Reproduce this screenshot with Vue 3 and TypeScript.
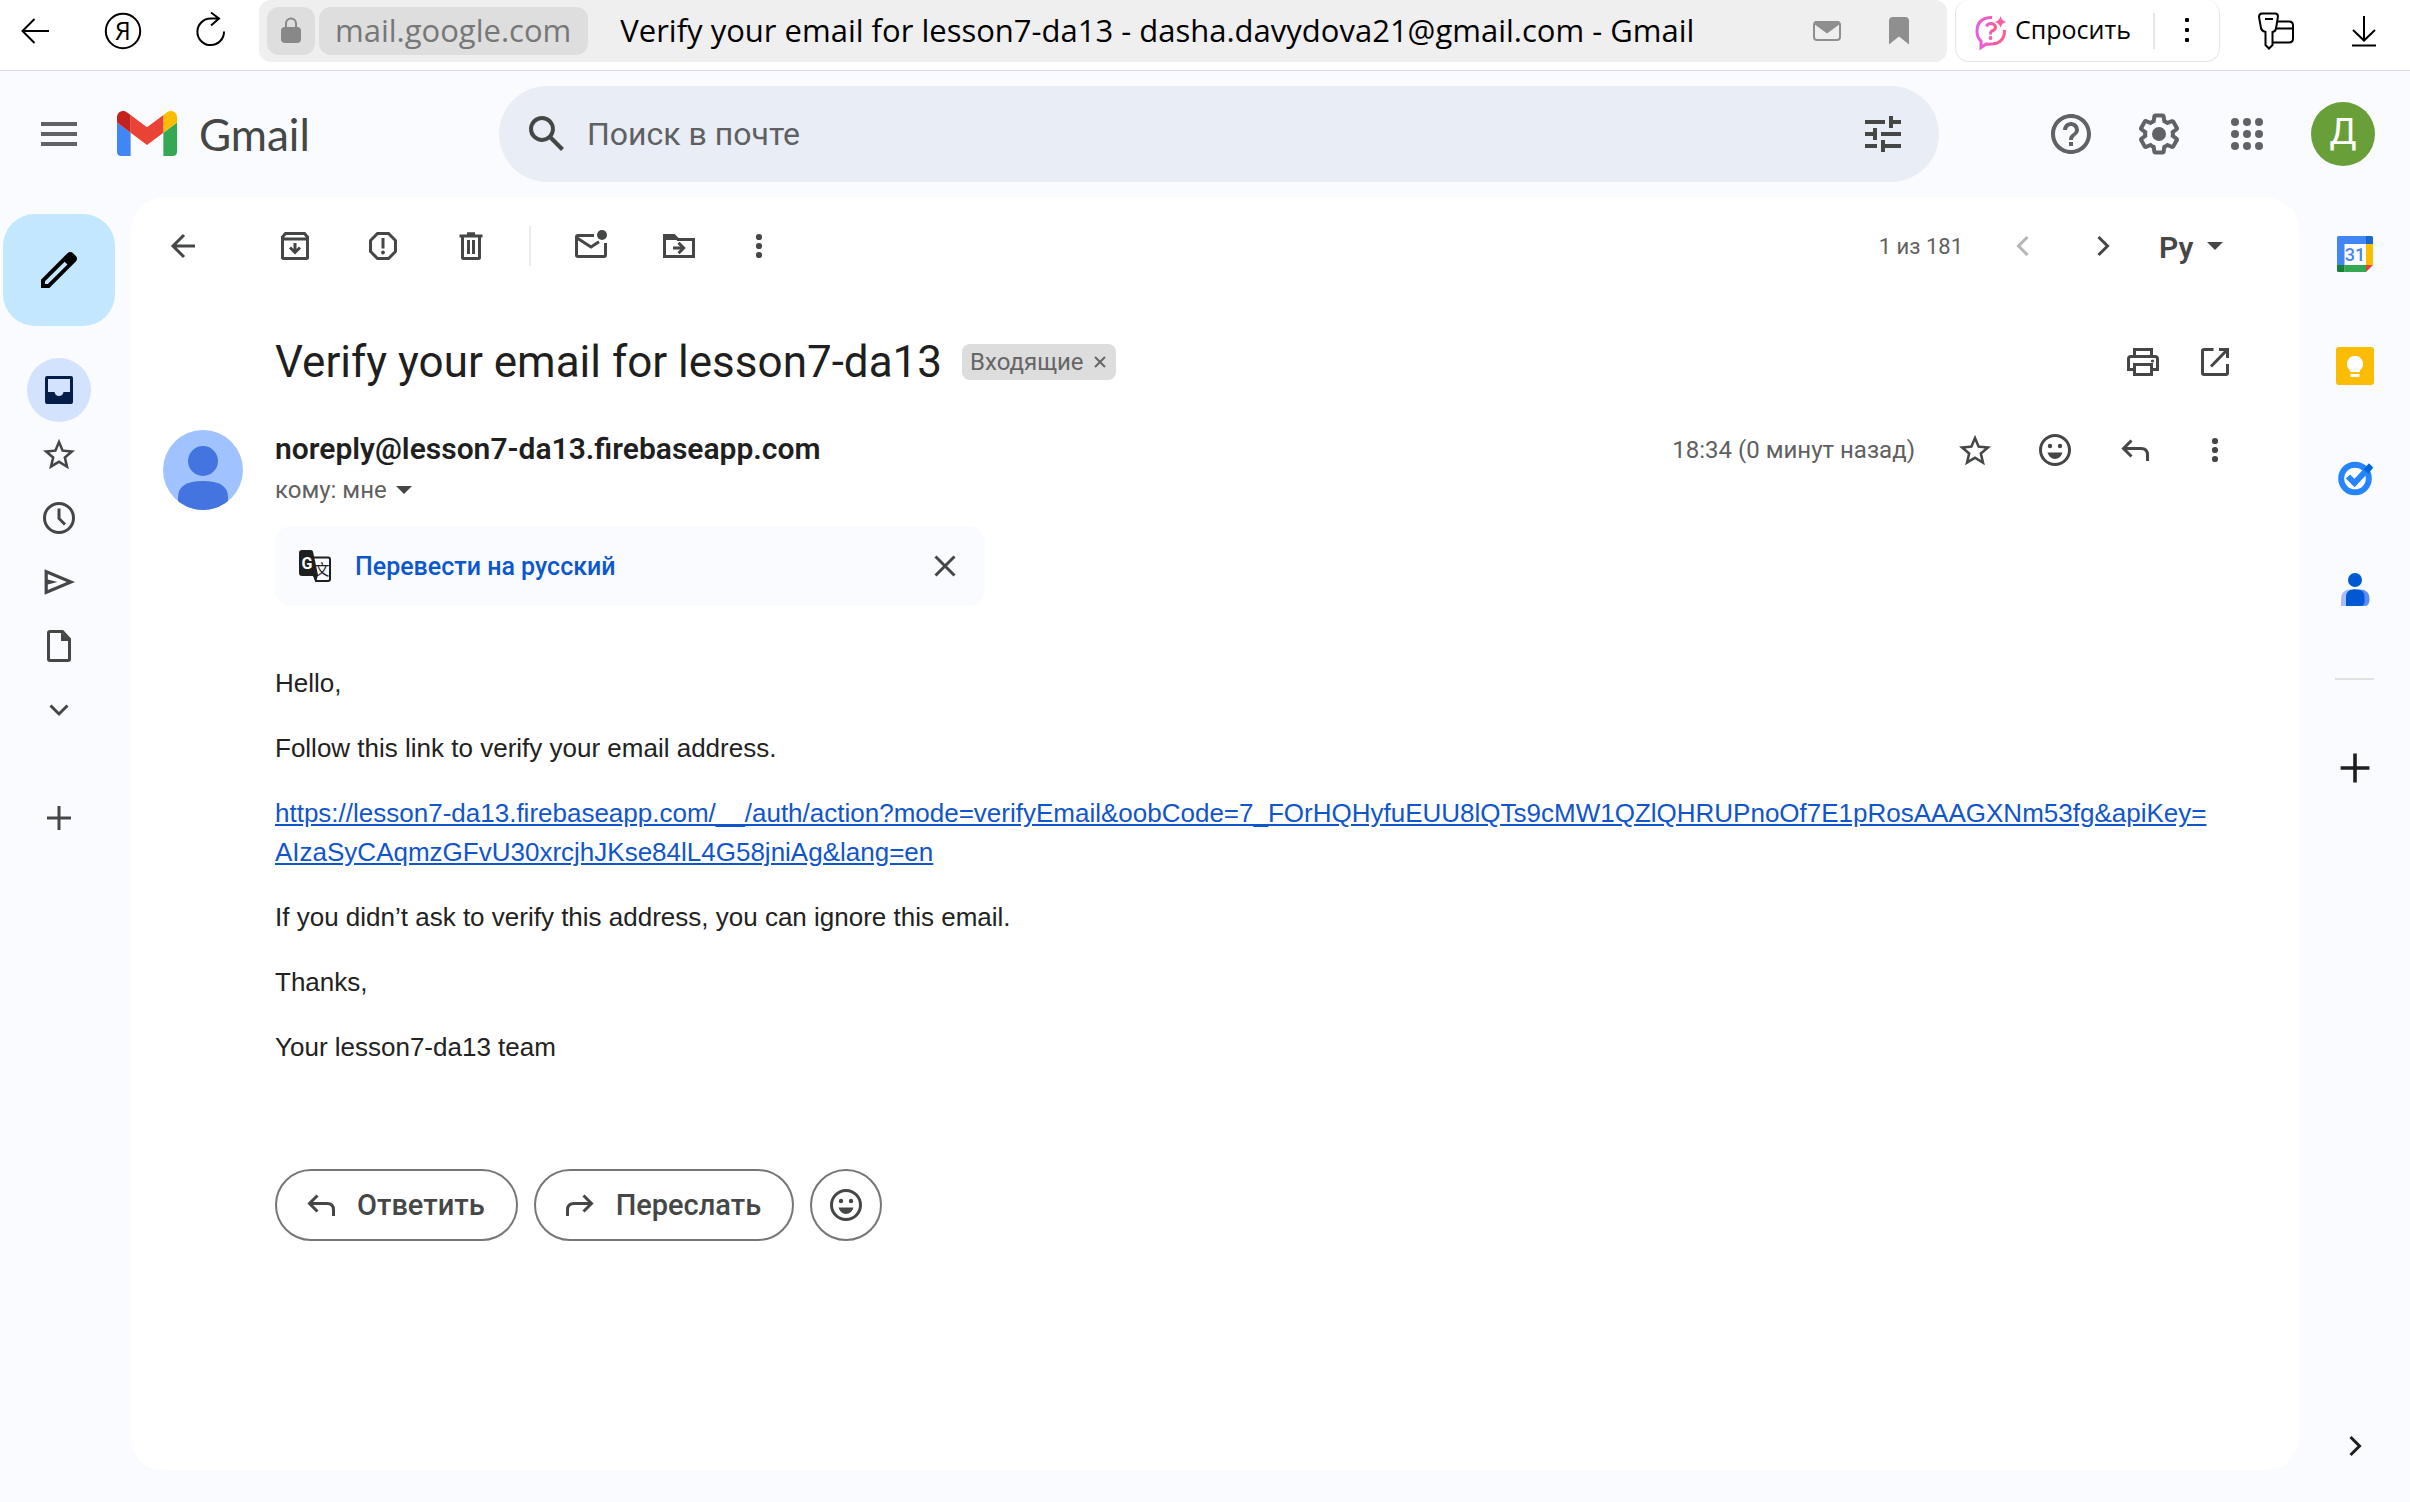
<script setup lang="ts">
import { ref } from 'vue'

interface Action {
  icon: string
  label: string
}

const query = ref('')
const subject = 'Verify your email for lesson7-da13'
const account = 'dasha.davydova21@gmail.com'
const sender = 'noreply@lesson7-da13.firebaseapp.com'
const verifyUrl =
  'https://lesson7-da13.firebaseapp.com/__/auth/action?mode=verifyEmail&oobCode=7_FOrHQHyfuEUU8lQTs9cMW1QZlQHRUPnoOf7E1pRosAAAGXNm53fg&apiKey=AIzaSyCAqmzGFvU30xrcjhJKse84lL4G58jniAg&lang=en'

const folders: Action[] = [
  { icon: 'inbox', label: 'Входящие' },
  { icon: 'star', label: 'Помеченные' },
  { icon: 'clock', label: 'Отложенные' },
  { icon: 'send', label: 'Отправленные' },
  { icon: 'file', label: 'Черновики' },
  { icon: 'down', label: 'Ещё' },
]

const primaryActions: Action[] = [
  { icon: 'archive', label: 'Архивировать' },
  { icon: 'spam', label: 'В спам' },
  { icon: 'trash', label: 'Удалить' },
]

const secondaryActions: Action[] = [
  { icon: 'unread', label: 'Отметить как непрочитанное' },
  { icon: 'move', label: 'Переместить в' },
]

const messageActions: Action[] = [
  { icon: 'star', label: 'Пометить' },
  { icon: 'smile', label: 'Добавить реакцию' },
  { icon: 'reply', label: 'Ответить' },
  { icon: 'more', label: 'Ещё' },
]

const addons: Action[] = [
  { icon: 'calendar', label: 'Календарь' },
  { icon: 'keep', label: 'Keep' },
  { icon: 'tasks', label: 'Задачи' },
  { icon: 'contacts', label: 'Контакты' },
]
</script>

<template>
  <div class="page">
    <svg class="sprite" aria-hidden="true">
      <symbol id="back" viewBox="0 0 40 40"><path class="ln" d="M32 20H10.500M21 9 10 20l11 11" /></symbol>
      <symbol id="archive" viewBox="0 0 40 40">
        <path class="ln" d="M7.500 11 10.500 7.500h19l3 3.500v20.500q0 1-1 1h-23q-1 0-1-1zM7.500 13h25M20 17v9M15 21.500l5 5 5-5" />
      </symbol>
      <symbol id="spam" viewBox="0 0 40 40">
        <path class="ln" d="M14.500 7.500h11l7 7v11l-7 7h-11l-7-7v-11zM20 12v10.500" /><circle cx="20" cy="26.500" r="1.900" />
      </symbol>
      <symbol id="trash" viewBox="0 0 40 40">
        <path class="ln" d="M8.500 10h23M16 7.800h8M11.500 10v21.500q0 1 1 1h15q1 0 1-1v-21.500M17.500 14v14M22.500 14v14" />
      </symbol>
      <symbol id="unread" viewBox="0 0 40 40">
        <path class="ln" d="M23 9.500H7q-1.500 0-1.500 1.500v18q0 1.500 1.500 1.500h26q1.500 0 1.500-1.500V17M6 12l14 9 8-5.200" />
        <circle cx="31" cy="9" r="5" />
      </symbol>
      <symbol id="move" viewBox="0 0 40 40">
        <path class="ln" d="M5.500 30.500v-21H15l4 4h15.500v17zM14 22h10M19.500 16.800l5.200 5.200-5.200 5.200" />
        <path d="M5 9h10.500l5 5H5z" />
      </symbol>
      <symbol id="more" viewBox="0 0 40 40"><circle cx="20" cy="11" r="3.100" /><circle cx="20" cy="20" r="3.100" /><circle cx="20" cy="29" r="3.100" /></symbol>
      <symbol id="prev" viewBox="0 0 40 40"><path class="ln" d="M24.500 11l-9 9 9 9" /></symbol>
      <symbol id="next" viewBox="0 0 40 40"><path class="ln" d="M15.500 11l9 9-9 9" /></symbol>
      <symbol id="down" viewBox="0 0 40 40"><path class="ln" d="M11.500 15.500l8.500 8.500 8.500-8.500" /></symbol>
      <symbol id="plus" viewBox="0 0 40 40"><path class="ln" d="M20 8v24M8 20h24" /></symbol>
      <symbol id="close" viewBox="0 0 40 40"><path class="ln" d="M10.500 10.500l19 19M29.500 10.500l-19 19" /></symbol>
      <symbol id="star" viewBox="-0.500 -1 25 25">
        <path d="M22 9.240l-7.190-.62L12 2 9.190 8.630 2 9.240l5.460 4.730L5.820 21 12 17.270 18.180 21l-1.630-7.030L22 9.240zM12 15.400l-3.760 2.270 1-4.280-3.320-2.880 4.380-.38L12 6.100l1.710 4.040 4.380.38-3.320 2.880 1 4.280L12 15.400z" />
      </symbol>
      <symbol id="clock" viewBox="0 0 40 40"><circle class="ln" cx="20" cy="20" r="14.500" /><path class="ln" d="M20 10.500v10l6 6" /></symbol>
      <symbol id="send" viewBox="-0.500 -0.500 25 25"><path d="M3 20V4l19 8zm2-3l11.850-5L5 7v3.500l6 1.500-6 1.500z" /></symbol>
      <symbol id="file" viewBox="0 0 40 40">
        <path class="ln" d="M11 5.500h12.500l7 7.500v20q0 1.500-1.500 1.500H11q-1.500 0-1.500-1.500V7q0-1.500 1.500-1.500z" /><path d="M22 6v9h9z" />
      </symbol>
      <symbol id="inbox" viewBox="0 0 40 40">
        <path fill-rule="evenodd" d="M8 6h24q2 0 2 2v24q0 2-2 2H8q-2 0-2-2V8q0-2 2-2zM9 9v13h6.500q.8 4 4.500 4t4.500-4H31V9z" />
      </symbol>
      <symbol id="print" viewBox="0 0 40 40">
        <path class="ln" d="M11.500 14V7.500h17V14M11.500 27.500h-6V17q0-2.500 2.500-2.500h24q2.500 0 2.500 2.500v10.500h-6M11.500 22.500h17v10h-17z" />
        <circle cx="29.500" cy="19" r="1.600" />
      </symbol>
      <symbol id="popout" viewBox="0 0 40 40">
        <path class="ln" d="M18.500 7.500H9q-1.500 0-1.500 1.500v22q0 1.500 1.500 1.500h22q1.500 0 1.500-1.500v-9M24 7.500h8.500v8.500M16 24.500 31.500 8.500" />
      </symbol>
      <symbol id="smile" viewBox="0 0 40 40">
        <circle class="ln" cx="20" cy="20" r="14.500" /><circle cx="15" cy="16" r="2.200" /><circle cx="25" cy="16" r="2.200" />
        <path d="M12.500 22.500h15q-2 6.500-7.500 6.500t-7.500-6.500z" />
      </symbol>
      <symbol id="reply" viewBox="0 0 40 40"><path class="ln" d="M32.500 31v-6q0-6.500-6.500-6.500H9M16.500 10.500l-8 8 8 8" /></symbol>
      <symbol id="forward" viewBox="0 0 40 40"><path class="ln" d="M7.500 31v-6q0-6.500 6.500-6.500h17M23.500 10.500l8 8-8 8" /></symbol>
      <symbol id="calendar" viewBox="0 0 40 40">
        <path fill="#fff" d="M9 9h22v22H9z" />
        <path fill="#4285f4" d="M3.500 2H31v8H9.500v21H2V3.500Q2 2 3.500 2z" />
        <path fill="#1967d2" d="M31 2h5.500Q38 2 38 3.500V10h-7z" />
        <path fill="#fbbc04" d="M31 10h7v21h-7z" />
        <path fill="#34a853" d="M9.500 31H31v7H9.500z" />
        <path fill="#188038" d="M2 31h7.500v7h-6Q2 38 2 36.500z" />
        <path fill="#ea4335" d="M31 31h7l-7 7z" />
      </symbol>
      <symbol id="keep" viewBox="0 0 40 40">
        <rect x="1" y="1" width="38" height="38" rx="3" fill="#fbbc04" />
        <path fill="#fff" d="M20 10a8 8 0 0 1 5 14.300v1.700H15v-1.700A8 8 0 0 1 20 10zM15.500 28h9v3h-9z" />
      </symbol>
      <symbol id="tasks" viewBox="0 0 40 40">
        <circle cx="20" cy="20.500" r="13.800" fill="#fff" stroke="#2684fc" stroke-width="6" />
        <path fill="none" stroke="#2684fc" stroke-width="6" d="M13 18.500l6.500 6.500L36 7.500" />
        <path fill="#0066da" d="M28.500 11.500 34 5.500l4 4-4.500 6z" />
      </symbol>
      <symbol id="contacts" viewBox="0 0 40 40">
        <circle cx="20" cy="10" r="7" fill="#0059d1" />
        <path fill="#a9bdfb" d="M6 36V29q0-9.500 9.500-9.500H20V36z" />
        <path fill="#5a8bf8" d="M18 19.500h7q9.500 0 9.500 9.500 0 7-4.500 7H18z" />
        <path fill="#0059d1" d="M11 36V27q0-7.500 7.500-7.500H22q7.500 0 7.500 7.500v4q0 5-3.500 5z" />
      </symbol>
    </svg>

    <div class="browser">
      <button class="sq" aria-label="Назад">
        <svg class="i40" viewBox="0 0 40 40"><path class="thin" d="M34 20H8M19.500 8 7.500 20l12 12" /></svg>
      </button>
      <button class="sq" aria-label="Яндекс">
        <svg class="i40" viewBox="0 0 40 40"><circle class="thin" cx="20" cy="20" r="17.200" /><text x="20" y="29" text-anchor="middle" class="ya">Я</text></svg>
      </button>
      <button class="sq" aria-label="Обновить">
        <svg class="i40" viewBox="0 0 40 40"><path class="thin" d="M33 20.500A13.300 13.300 0 1 1 20 7.500h8.500M20 1.500l8 6-8 7" /></svg>
      </button>
      <div class="omnibox">
        <button class="lock" aria-label="Сведения о сайте">
          <svg class="i40" viewBox="0 0 40 40"><path class="lockbow" d="M15 17v-4.500a5 5 0 0 1 10 0V17" /><rect x="10" y="16" width="20" height="16" rx="4" /></svg>
        </button>
        <button class="domain">mail.google.com</button>
        <span class="tab-title">{{ subject }} - {{ account }} - Gmail</span>
        <button class="mini" aria-label="Почта">
          <svg class="i40" viewBox="0 0 40 40"><rect x="7" y="11" width="26" height="18" rx="3" fill="none" stroke="currentColor" stroke-width="2" /><path d="M8 10h24l1 3-13 9.500L7 13z" /></svg>
        </button>
        <button class="mini" aria-label="Закладка">
          <svg class="i40" viewBox="0 0 40 40"><path d="M10 10q0-4 4-4h12q4 0 4 4v23.500l-10-8-10 8z" /></svg>
        </button>
      </div>
      <div class="ask">
        <button class="ask-main">
          <svg class="i40" viewBox="0 0 40 40">
            <defs><linearGradient id="pink" x1="0" x2="1"><stop offset="0" stop-color="#e85ce0" /><stop offset="1" stop-color="#ff5c8a" /></linearGradient></defs>
            <path class="ask-ln" d="M21 6.500q-15 0-15 14 0 6 4 9.500v6.500l5-3.500q19 1.500 18.500-14" />
            <path class="ask-ln" d="M15.500 15.500q1-3 4.500-3t4.500 3.500q0 3-3.500 4-1.500.5-1.500 3.500" />
            <circle cx="19.500" cy="27" r="1.900" fill="#f45cab" />
            <path fill="#ff5ca0" d="M29.500 5q1 5 6 6-5 1-6 6-1-5-6-6 5-1 6-6z" />
          </svg>
          <span>Спросить</span>
        </button>
        <button class="ask-more" aria-label="Меню">
          <svg class="i40" viewBox="0 0 40 40"><rect x="18" y="7" width="4" height="4" rx="1" /><rect x="18" y="17" width="4" height="4" rx="1" /><rect x="18" y="27" width="4" height="4" rx="1" /></svg>
        </button>
      </div>
      <button class="sq keys" aria-label="Пароли и карты">
        <svg class="i40" viewBox="0 0 40 40">
          <path class="thin" d="M6 2.500h13q3 0 3 3l-2 12q-.5 3-3.500 3.500v13L13 37.500 9.500 34V21q-4-1-4.500-4L3 6q0-3.500 3-3.500zM9 8h8" />
          <path class="thin" d="M22 10.500h11q4 0 4 4v13q0 4-4 4H17M21 17.500h16" />
        </svg>
      </button>
      <button class="sq" aria-label="Загрузки">
        <svg class="i40" viewBox="0 0 40 40"><path class="thin" d="M20 5v24M9 19l11 10.500L31 19M8 34.500h24" /></svg>
      </button>
    </div>

    <header class="header">
      <div class="brand">
        <button class="sq grey" aria-label="Главное меню">
          <svg class="i48" viewBox="0 0 24 24"><path d="M3 18h18v-2H3v2zm0-5h18v-2H3v2zm0-7v2h18V6H3z" /></svg>
        </button>
        <a href="#" class="logo">
          <svg class="m" viewBox="52 42 88 66">
            <path fill="#4285f4" d="M58 108h14V74L52 59v43c0 3.320 2.690 6 6 6" />
            <path fill="#34a853" d="M120 108h14c3.320 0 6-2.690 6-6V59l-20 15" />
            <path fill="#fbbc04" d="M120 48v26l20-15v-8c0-7.420-8.470-11.650-14.400-7.200" />
            <path fill="#ea4335" d="M72 74V48l24 18 24-18v26L96 92" />
            <path fill="#c5221f" d="M52 51v8l20 15V48l-5.600-4.200c-5.940-4.450-14.400-.22-14.400 7.200" />
          </svg>
          <span>Gmail</span>
        </a>
      </div>
      <form class="search" @submit.prevent>
        <button class="sq" aria-label="Поиск">
          <svg class="i48" viewBox="0 0 24 24"><path d="M20.490 19l-5.730-5.730A6.500 6.500 0 1 0 13.270 14.760L19 20.490 20.490 19zM5 9.500a4.500 4.500 0 1 1 9 0 4.500 4.500 0 0 1-9 0z" /></svg>
        </button>
        <input v-model="query" type="text" aria-label="Поиск в почте" placeholder="Поиск в почте" />
        <button class="sq" type="button" aria-label="Расширенный поиск">
          <svg class="i48" viewBox="0 0 24 24"><path d="M3 17v2h6v-2H3zM3 5v2h10V5H3zm10 16v-2h8v-2h-8v-2h-2v6h2zM7 9v2H3v2h4v2h2V9H7zm14 4v-2H11v2h10zm-6-4h2V7h4V5h-4V3h-2v6z" /></svg>
        </button>
      </form>
      <div class="tools">
        <button class="sq grey" aria-label="Поддержка">
          <svg class="i48" viewBox="0 0 24 24"><path d="M11 18h2v-2h-2v2zm1-16C6.480 2 2 6.480 2 12s4.480 10 10 10 10-4.480 10-10S17.520 2 12 2zm0 18c-4.410 0-8-3.590-8-8s3.590-8 8-8 8 3.590 8 8-3.590 8-8 8zm0-14c-2.210 0-4 1.790-4 4h2c0-1.100.9-2 2-2s2 .9 2 2c0 2-3 1.750-3 5h2c0-2.250 3-2.500 3-5 0-2.210-1.790-4-4-4z" /></svg>
        </button>
        <button class="sq grey" aria-label="Настройки">
          <svg class="i48" viewBox="0 0 24 24"><path d="M13.850 22.250h-3.700c-.74 0-1.360-.54-1.450-1.270l-.27-1.890c-.27-.14-.53-.29-.79-.46l-1.800.72c-.7.26-1.470-.03-1.810-.65L2.200 15.530c-.35-.66-.2-1.440.36-1.880l1.530-1.190c-.01-.15-.02-.3-.02-.46 0-.15.01-.31.02-.46l-1.520-1.190c-.59-.45-.74-1.260-.37-1.880l1.850-3.190c.34-.62 1.110-.9 1.790-.63l1.810.73c.26-.17.52-.32.78-.46l.27-1.910c.09-.7.71-1.250 1.440-1.250h3.700c.74 0 1.360.54 1.450 1.270l.27 1.890c.27.14.53.29.79.46l1.800-.72c.71-.26 1.480.03 1.820.65l1.840 3.180c.36.66.2 1.440-.36 1.880l-1.520 1.190c.01.15.02.3.02.46s-.01.31-.02.46l1.520 1.190c.56.45.72 1.230.37 1.860l-1.860 3.220c-.34.62-1.110.9-1.800.63l-1.800-.72c-.26.17-.52.32-.78.46l-.27 1.910c-.1.68-.72 1.220-1.460 1.220zm-3.230-2h2.760l.37-2.550.53-.22c.44-.18.88-.44 1.340-.78l.45-.34 2.380.96 1.380-2.400-2.030-1.580.07-.56c.03-.26.06-.51.06-.78s-.03-.53-.06-.78l-.07-.56 2.030-1.580-1.390-2.400-2.390.96-.45-.35c-.42-.32-.87-.58-1.330-.77l-.52-.22-.37-2.550h-2.760l-.37 2.550-.53.21c-.44.19-.88.44-1.340.79l-.45.33-2.380-.95-1.390 2.390 2.030 1.580-.07.56a7 7 0 0 0-.06.79c0 .26.02.53.06.78l.07.56-2.030 1.580 1.380 2.400 2.390-.96.45.35c.43.33.86.58 1.330.77l.53.22.38 2.550z" /><circle cx="12" cy="12" r="3.500" /></svg>
        </button>
        <button class="sq grey" aria-label="Приложения Google">
          <svg class="i48" viewBox="0 0 24 24"><circle v-for="n in 9" :key="n" :cx="6 + ((n - 1) % 3) * 6" :cy="6 + Math.floor((n - 1) / 3) * 6" r="2" /></svg>
        </button>
        <button class="account" aria-label="Аккаунт Google">Д</button>
      </div>
    </header>

    <main class="main">
      <nav class="rail">
        <button class="compose" aria-label="Написать">
          <svg class="i48" viewBox="0 0 24 24"><path d="M20.410 4.940l-1.350-1.350c-.78-.78-2.050-.78-2.830 0L3 16.820V21h4.180L20.410 7.770c.79-.78.79-2.050 0-2.830zM6.410 19.060 5 19v-1.360l9.820-9.820 1.410 1.410z" /></svg>
        </button>
        <button v-for="(f, i) in folders" :key="f.icon" class="folder" :class="{ active: i === 0 }" :aria-label="f.label">
          <svg class="i40"><use :href="'#' + f.icon" /></svg>
        </button>
        <button class="folder add" aria-label="Создать ярлык"><svg class="i40"><use href="#plus" /></svg></button>
      </nav>

      <section class="card">
        <div class="toolbar">
          <button class="sq first" aria-label="Назад"><svg class="i40"><use href="#back" /></svg></button>
          <div class="group">
            <button v-for="a in primaryActions" :key="a.icon" class="sq" :aria-label="a.label"><svg class="i40"><use :href="'#' + a.icon" /></svg></button>
          </div>
          <span class="divider"></span>
          <div class="group">
            <button v-for="a in secondaryActions" :key="a.icon" class="sq" :aria-label="a.label"><svg class="i40"><use :href="'#' + a.icon" /></svg></button>
          </div>
          <button class="sq overflow" aria-label="Ещё"><svg class="i40"><use href="#more" /></svg></button>
          <div class="pager">
            <span class="count">1 из 181</span>
            <button class="sq" disabled aria-label="Предыдущее"><svg class="i40"><use href="#prev" /></svg></button>
            <button class="sq" aria-label="Следующее"><svg class="i40"><use href="#next" /></svg></button>
            <button class="lang" aria-label="Способ ввода"><span>Ру</span><i class="caret"></i></button>
          </div>
        </div>

        <div class="subject">
          <h1>{{ subject }}</h1>
          <span class="label">Входящие
            <button aria-label="Удалить ярлык"><svg viewBox="0 0 12 12"><path d="M1 1l10 10M11 1L1 11" fill="none" stroke="currentColor" stroke-width="2" /></svg></button>
          </span>
          <div class="subject-actions">
            <button aria-label="Печать"><svg class="i40"><use href="#print" /></svg></button>
            <button aria-label="В новом окне"><svg class="i40"><use href="#popout" /></svg></button>
          </div>
        </div>

        <article class="message">
          <svg class="avatar" viewBox="0 0 80 80">
            <defs><clipPath id="round"><circle cx="40" cy="40" r="40" /></clipPath></defs>
            <g clip-path="url(#round)">
              <rect width="80" height="80" fill="#a0c3ff" />
              <circle cx="40" cy="31" r="15" fill="#4374e0" />
              <path fill="#4374e0" d="M15 80V67q0-16 25-16t25 16v13z" />
            </g>
          </svg>
          <div class="content">
            <div class="line">
              <h2>{{ sender }}</h2>
              <time>18:34 (0 минут назад)</time>
              <div class="message-actions">
                <button v-for="a in messageActions" :key="a.icon" :aria-label="a.label"><svg class="i40"><use :href="'#' + a.icon" /></svg></button>
              </div>
            </div>
            <button class="to">кому: мне<i class="caret"></i></button>

            <div class="translate">
              <svg class="i32" viewBox="0 0 32 32">
                <path fill="none" stroke="currentColor" stroke-width="2" d="M14 7.500h15q2 0 2 2V29q0 2-2 2H17l-2-6" />
                <path d="M3 0h9q1.500 0 2 1.500L19 25l-2 7-3-6H3q-3 0-3-3V3q0-3 3-3z" />
                <text x="8" y="19" text-anchor="middle" class="tr-g">G</text>
                <text x="23" y="25" text-anchor="middle" class="tr-z">文</text>
              </svg>
              <a href="#">Перевести на русский</a>
              <button aria-label="Закрыть"><svg class="i40"><use href="#close" /></svg></button>
            </div>

            <div class="text">
              <p>Hello,</p>
              <p>Follow this link to verify your email address.</p>
              <p><a :href="verifyUrl">{{ verifyUrl }}</a></p>
              <p>If you didn’t ask to verify this address, you can ignore this email.</p>
              <p>Thanks,</p>
              <p>Your lesson7-da13 team</p>
            </div>

            <div class="replies">
              <button class="pill"><svg class="i40"><use href="#reply" /></svg>Ответить</button>
              <button class="pill"><svg class="i40"><use href="#forward" /></svg>Переслать</button>
              <button class="pill round" aria-label="Добавить реакцию"><svg class="i40"><use href="#smile" /></svg></button>
            </div>
          </div>
        </article>
      </section>

      <aside class="side">
        <button v-for="a in addons" :key="a.icon" class="addon" :aria-label="a.label">
          <svg class="i40" viewBox="0 0 40 40">
            <use :href="'#' + a.icon" />
            <text v-if="a.icon === 'calendar'" x="20" y="27" text-anchor="middle" class="cal-day">31</text>
          </svg>
        </button>
        <hr />
        <button class="sq dark" aria-label="Установить дополнения"><svg class="i48"><use href="#plus" /></svg></button>
        <button class="sq dark hide" aria-label="Скрыть боковую панель"><svg class="i40"><use href="#next" /></svg></button>
      </aside>
    </main>
  </div>
</template>

<style>
body {
  margin: 0;
}
</style>

<style scoped>
.page {
  display: flex;
  flex-direction: column;
  min-height: 100vh;
  background: #f9fbff;
  color: #444746;
  font-family: Roboto, "Noto Sans", sans-serif;
}
.sprite {
  position: absolute;
  width: 0;
  height: 0;
}
button {
  display: inline-flex;
  align-items: center;
  justify-content: center;
  flex: none;
  padding: 0;
  border: 0;
  background: none;
  color: inherit;
  font: inherit;
}
svg {
  display: block;
  flex: none;
  fill: currentColor;
}
.i32 { width: 32px; height: 32px; }
.i40 { width: 40px; height: 40px; }
.i48 { width: 48px; height: 48px; }
.ln {
  fill: none;
  stroke: currentColor;
  stroke-width: 3;
}
.thin {
  fill: none;
  stroke: currentColor;
  stroke-width: 2;
}
.sq {
  width: 48px;
  height: 48px;
}
.grey { color: #5f6368; }
.dark { color: #1f1f1f; }

/* browser chrome */
.browser {
  display: flex;
  align-items: center;
  gap: 40px;
  height: 62px;
  padding: 0 22px 8px 11px;
  border-bottom: 1px solid #dadce0;
  background: #fff;
  color: #000;
  font-family: "Open Sans", "Noto Sans", sans-serif;
}
.ya { font: 25px "Open Sans", sans-serif; }
.omnibox {
  display: flex;
  align-items: center;
  flex: 1;
  min-width: 0;
  height: 62px;
  margin: 0 -32px 0 -16px;
  padding: 0 28px 0 8px;
  box-sizing: border-box;
  border-radius: 12px;
  background: #efefef;
}
.lock,
.domain {
  height: 48px;
  border-radius: 12px;
  background: #dedede;
}
.lock {
  width: 48px;
  color: #888;
}
.lockbow {
  fill: none;
  stroke: #888;
  stroke-width: 2;
}
.domain {
  box-sizing: border-box;
  margin-left: 4px;
  padding: 0 17px 2px 16px;
  color: #777;
  font-size: 31px;
}
.tab-title {
  flex: 1;
  min-width: 0;
  margin-left: 32px;
  padding-bottom: 2px;
  overflow: hidden;
  font-size: 31px;
  white-space: nowrap;
  text-overflow: ellipsis;
}
.mini {
  margin-left: 32px;
  color: #8f8f8f;
}
.ask {
  display: flex;
  align-items: center;
  height: 62px;
  box-sizing: border-box;
  border: 1px solid #e6e6e6;
  border-top: 0;
  border-radius: 14px;
  font-size: 25px;
}
.ask-main {
  gap: 4px;
  height: 36px;
  padding: 0 22px 0 15px;
  border-right: 2px solid #e6e6e6;
}
.ask-main span { padding-bottom: 4px; }
.ask-ln {
  fill: none;
  stroke: url(#pink);
  stroke-width: 3;
}
.ask-more { width: 64px; }
.keys { margin-left: -8px; }

/* header */
.header {
  display: flex;
  align-items: center;
  height: 125px;
  padding: 0 35px 2px 0;
}
.brand {
  display: flex;
  align-items: center;
  gap: 34px;
  width: 464px;
  padding-left: 35px;
}
.logo {
  display: flex;
  align-items: center;
  gap: 22px;
  color: #444746;
  font: 44px Lato, sans-serif;
  text-decoration: none;
}
.m {
  width: 60px;
  height: 45px;
}
.search {
  display: flex;
  align-items: center;
  flex: 1;
  height: 96px;
  box-sizing: border-box;
  padding: 0 32px 0 24px;
  border-radius: 48px;
  background: #e9eef6;
}
.search input {
  flex: 1;
  min-width: 0;
  padding: 0 16px;
  border: 0;
  outline: 0;
  background: none;
  color: #1f1f1f;
  font: 32px Roboto, sans-serif;
}
.search input::placeholder {
  color: #5f6061;
  opacity: 1;
}
.tools {
  display: flex;
  align-items: center;
  gap: 40px;
  margin-left: 108px;
}
.account {
  width: 64px;
  height: 64px;
  box-sizing: border-box;
  padding-bottom: 4px;
  border-radius: 50%;
  background: #689f38;
  color: #fff;
  font-size: 36px;
}

/* body */
.main {
  display: flex;
  flex: 1;
}
.rail {
  display: flex;
  flex-direction: column;
  align-items: center;
  width: 118px;
  margin-right: 13px;
  padding-top: 16px;
}
.compose {
  width: 112px;
  height: 112px;
  margin-bottom: 32px;
  border-radius: 32px;
  background: #c2e7ff;
  color: #000;
}
.folder {
  width: 64px;
  height: 64px;
  border-radius: 50%;
}
.active {
  background: #d3e3fd;
  color: #041e49;
}
.add { margin-top: 44px; }

.card {
  flex: 1;
  min-width: 0;
  margin-bottom: 32px;
  border-radius: 32px;
  background: #fff;
}
.toolbar {
  display: flex;
  align-items: center;
  height: 96px;
  padding: 0 76px 0 28px;
}
.first { margin-right: 64px; }
.group {
  display: flex;
  gap: 40px;
}
.divider {
  width: 2px;
  height: 40px;
  margin: 0 36px 0 34px;
  background: #ececec;
}
.overflow { margin-left: 32px; }
.pager {
  display: flex;
  align-items: center;
  gap: 32px;
  margin-left: auto;
}
.count {
  margin-right: 4px;
  color: #5f6061;
  font-size: 22px;
}
.pager button:disabled { color: #b4b5b5; }
.lang {
  justify-content: space-between;
  width: 64px;
  font-size: 30px;
  font-weight: 600;
}
.lang span {
  padding-top: 4px;
  line-height: 32px;
}
.caret {
  border: 8px solid transparent;
  border-top-color: #444746;
  border-bottom: 0;
}

.subject {
  display: flex;
  align-items: center;
  height: 136px;
  padding: 0 64px 0 144px;
}
h1 {
  margin: 0;
  color: #1f1f1f;
  font-size: 44px;
  font-weight: 400;
}
.label {
  display: flex;
  align-items: center;
  height: 36px;
  margin-left: 20px;
  padding-left: 8px;
  border-radius: 8px;
  background: #ddd;
  color: #666;
  font-size: 24px;
}
.label button {
  width: 32px;
  height: 36px;
}
.label svg {
  width: 12px;
  height: 12px;
}
.subject-actions {
  display: flex;
  gap: 32px;
  margin-left: auto;
}

.message {
  display: flex;
  gap: 32px;
  padding: 0 64px 32px 32px;
}
.avatar {
  width: 80px;
  height: 80px;
}
.content {
  flex: 1;
  min-width: 0;
}
.line {
  display: flex;
  align-items: center;
  height: 40px;
}
h2 {
  margin: 0;
  padding-bottom: 3px;
  color: #1f1f1f;
  font-size: 30px;
  font-weight: 600;
}
time {
  margin-left: auto;
  color: #5f6061;
  font-size: 24px;
}
.message-actions {
  display: flex;
  gap: 40px;
  margin-left: 40px;
}
.to {
  gap: 9px;
  height: 40px;
  color: #5f6061;
  font-size: 24px;
}
.translate {
  display: flex;
  align-items: center;
  width: 710px;
  max-width: 100%;
  height: 80px;
  box-sizing: border-box;
  margin-top: 16px;
  padding: 0 20px 0 24px;
  border-radius: 16px;
  background: #f9fbff;
  color: #1f1f1f;
}
.translate a {
  margin: 0 auto 0 24px;
  color: #0b57d0;
  font-size: 25px;
  font-weight: 500;
  text-decoration: none;
}
.translate button { color: #444746; }
.tr-g {
  fill: #fff;
  font: 700 16px Roboto, sans-serif;
}
.tr-z { font: 15px "Noto Sans CJK SC", sans-serif; }
.cal-day {
  fill: #4285f4;
  font: 500 18px Roboto, sans-serif;
}
.text {
  margin: 58px 16px 0 0;
  color: #222;
  font: 26px/39px "Liberation Sans", sans-serif;
}
.text p { margin: 0 0 26px; }
.text a {
  color: #1155cc;
  word-break: break-all;
}
.replies {
  display: flex;
  gap: 16px;
  margin-top: 102px;
}
.pill {
  gap: 16px;
  height: 72px;
  box-sizing: border-box;
  padding: 0 31px 0 24px;
  border: 2px solid #747775;
  border-radius: 36px;
  font-size: 29px;
  font-weight: 500;
}
.round {
  width: 72px;
  padding: 0;
}

.side {
  display: flex;
  flex-direction: column;
  align-items: center;
  width: 111px;
  padding-bottom: 32px;
}
.addon {
  width: 64px;
  height: 112px;
}
hr {
  width: 39px;
  height: 2px;
  margin: 32px 0 64px;
  border: 0;
  background: #e0e2e0;
}
.hide { margin-top: auto; }
</style>
